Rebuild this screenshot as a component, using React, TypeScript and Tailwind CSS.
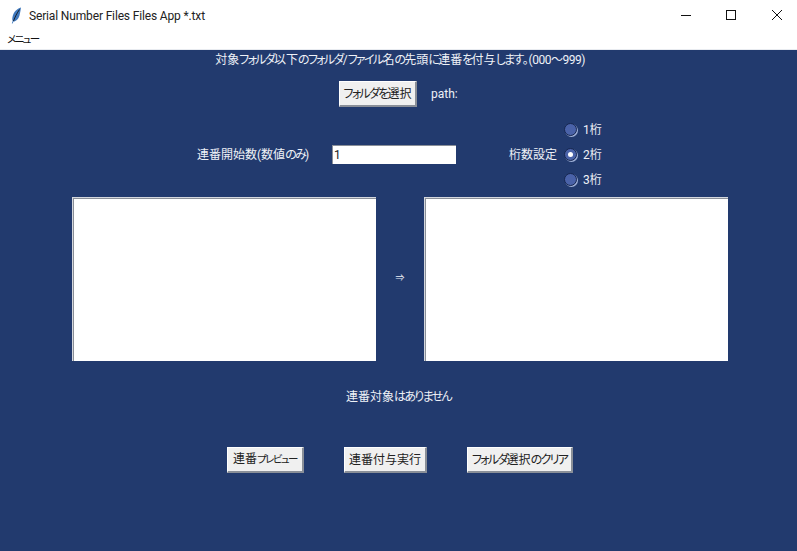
const font = {
  fontFamily: 'Roboto, "Noto Sans CJK JP", sans-serif',
  fontFeatureSettings: '"palt"',
};

// kana runs are set tighter than kanji, the way the original UI font does it
function Jp({ text }: { text: string }) {
  return (
    <>
      {text.split(/([\u3040-\u30ff]+)/).map((part, i) =>
        i % 2 === 1 ? (
          <span key={i} className={part.includes("ー") ? "text-[10.5px] tracking-[-1.6px]" : "tracking-[-1.7px]"}>
            {part}
          </span>
        ) : (
          part
        ),
      )}
    </>
  );
}

function TkButton({ label, width }: { label: string; width: string }) {
  return (
    <button
      className={`${width} h-[26px] bg-[#f0f0f0] text-[12px] leading-none whitespace-nowrap text-[#222] border-t border-l border-t-white border-l-white border-r-2 border-b-2 border-r-[#8a8f98] border-b-[#8a8f98]`}
    >
      <Jp text={label} />
    </button>
  );
}

function Radio({ label, checked }: { label: string; checked?: boolean }) {
  return (
    <div className="h-[25px] flex items-center">
      <span className="w-[13px] h-[13px] rounded-full bg-[#4a62a8] border border-[#16264f] flex items-center justify-center shadow-[1px_1px_0_#9fb0d8]">
        {checked && <span className="w-[5px] h-[5px] rounded-full bg-white" />}
      </span>
      <span className="ml-[6px] text-[12px] text-[#eef1f7]">{label}</span>
    </div>
  );
}

function ListBox() {
  return (
    <div className="w-[304px] h-[164px] bg-white border-t border-l border-[#d5d8de] shadow-[inset_1px_1px_0_#8a8f98]" />
  );
}

export default function App() {
  return (
    <div className="w-[797px] h-[551px] flex flex-col overflow-hidden bg-white" style={font}>
      <div className="h-[31px] flex items-center shrink-0">
        <svg className="ml-[11px] w-[11px] h-[17px]" viewBox="0 0 11 17">
          <path d="M10 0.5C6 1.500 2.500 5 1.500 10c-.4 2-.2 3.200.2 4L.8 16.500h.8l.9-2c2.500 0 5-2.500 6-6 .7-3 1.200-5.500 1.500-8z" fill="#3f78bd" />
          <path d="M8.500 2.500C6 6 4 10 2.500 14" stroke="#0a0a0a" strokeWidth="0.8" fill="none" />
        </svg>
        <span className="ml-[7px] text-[12px] tracking-[-0.15px] text-[#222]">Serial Number Files Files App *.txt</span>
        <div className="ml-auto flex items-center">
          <svg className="w-[46px] h-[30px]" viewBox="0 0 46 30">
            <path d="M22 14.500h10" stroke="#111" strokeWidth="1" />
          </svg>
          <svg className="w-[46px] h-[30px]" viewBox="0 0 46 30">
            <rect x="21.500" y="9.500" width="9" height="9" stroke="#111" fill="none" />
          </svg>
          <svg className="w-[46px] h-[30px]" viewBox="0 0 46 30">
            <path d="M21 9l10 10M31 9L21 19" stroke="#111" strokeWidth="1" />
          </svg>
        </div>
      </div>

      <div className="h-[19px] shrink-0 flex items-center pl-[7px] text-[12px] leading-none text-[#111] border-b border-[#e8ebf0]">
        <Jp text="メニュー" />
      </div>

      <main className="flex-1 bg-[#223a6e] text-[#eef1f7] text-[12px] flex flex-col">
        <p className="mt-[1px] pl-[3px] h-[18px] leading-[18px] text-center">
          <Jp text="対象フォルダ以下のフォルダ/ファイル名の先頭に連番を付与します。" />
          <span className="tracking-[-0.5px]">(000〜999)</span>
        </p>

        <div className="mt-[12px] ml-[339px] flex items-center">
          <TkButton label="フォルダを選択" width="w-[78px]" />
          <span className="ml-[14px]">path:</span>
        </div>

        <div className="mt-[10px] h-[75px] flex items-center">
          <span className="ml-[197px] w-[135px]">
            <Jp text="連番開始数(数値のみ)" />
          </span>
          <input
            readOnly
            value="1"
            className="w-[124px] h-[19px] bg-white text-[#222] text-[12px] pl-[1px] border-t border-l border-[#8a8f98] outline-none"
          />
          <span className="ml-[53px] w-[55px]">桁数設定</span>
          <div className="flex flex-col">
            <Radio label="1桁" />
            <Radio label="2桁" checked />
            <Radio label="3桁" />
          </div>
        </div>

        <div className="mt-[5px] ml-[72px] flex items-center">
          <ListBox />
          <span className="w-[48px] text-center text-[9px]">⇒</span>
          <ListBox />
        </div>

        <p className="mt-[27px] h-[18px] leading-[18px] text-center">
          <Jp text="連番対象はありません" />
        </p>

        <div className="mt-[41px] ml-[227px] flex items-center">
          <TkButton label="連番プレビュー" width="w-[77px]" />
          <div className="ml-[40px]">
            <TkButton label="連番付与実行" width="w-[83px]" />
          </div>
          <div className="ml-[40px]">
            <TkButton label="フォルダ選択のクリア" width="w-[106px]" />
          </div>
        </div>
      </main>
    </div>
  );
}
